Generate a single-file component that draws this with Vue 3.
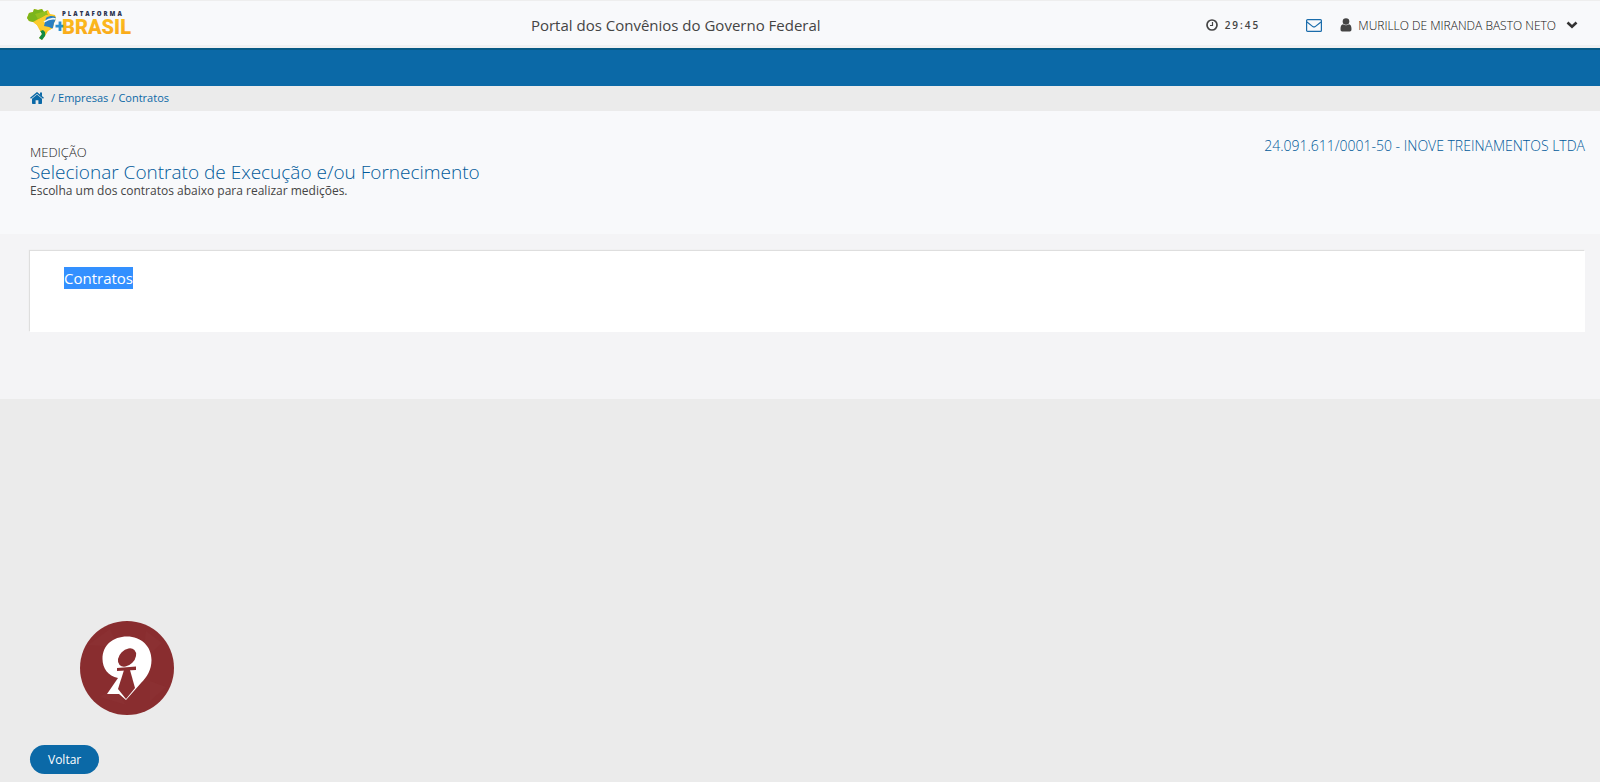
<template>
  <div class="page">
    <header class="topbar">
      <a class="brand" href="#" aria-label="Plataforma +Brasil">
        <svg class="brand-logo" viewBox="0 0 108 34" width="108" height="34">
          <defs>
            <clipPath id="country">
              <path :d="countryShape" />
            </clipPath>
            <linearGradient id="gold" x1="0" y1="0" x2="0" y2="1">
              <stop offset="0" stop-color="#fcc11f" />
              <stop offset="1" stop-color="#f9a51a" />
            </linearGradient>
          </defs>
          <g clip-path="url(#country)">
            <rect width="32" height="34" fill="#f9c623" />
            <path d="M0 0H22L20 7L14 10L7 14L0 17Z" fill="#7ab51d" />
            <path d="M9 6L20 3L22 7L12 11Z" fill="#95c11f" />
            <path d="M7 15L20 7L32 8L24 22L18 23Z" fill="#fccb2d" />
            <path d="M20 10C24 7 30 8 30 10L27 21L23 19L18 18Z" fill="#2a7fc1" />
            <path d="M18 14C22 11 26 10 30 11" stroke="#eef6fb" stroke-width="1.500" fill="none" />
            <path d="M12 24L17 22L19 24L20 34H12Z" fill="#118a43" />
          </g>
          <path d="M34 13.500V23M29.500 18.200H39" stroke="#2a8fd0" stroke-width="2.800" />
          <text class="logo-top" x="36" y="8">PLATAFORMA</text>
          <text class="logo-name" x="36" y="26">BRASIL</text>
        </svg>
      </a>
      <h1 class="portal-title">Portal dos Convênios do Governo Federal</h1>
      <div class="session">
        <div class="timer">
          <svg viewBox="0 0 12 12" width="12" height="12">
            <circle cx="6" cy="6" r="5" fill="none" stroke="#444" stroke-width="1.700" />
            <path d="M6.500 3V6.500H4" fill="none" stroke="#444" stroke-width="1.200" />
          </svg>
          <span>29:45</span>
        </div>
        <a class="mail" href="#" aria-label="Mensagens">
          <svg viewBox="0 0 16 13" width="16" height="13">
            <rect x="0.600" y="0.600" width="14.800" height="11.800" rx="1" fill="none" stroke="#1a6cab" stroke-width="1.200" />
            <path d="M1 3L6.800 7.600Q8 8.400 9.200 7.600L15 3" fill="none" stroke="#1a6cab" stroke-width="1.200" />
          </svg>
        </a>
        <button class="user" type="button">
          <svg viewBox="0 0 12 14" width="12" height="14">
            <path d="M0.500 11C0.500 8 1.500 6.500 3 6.300C4.500 7.500 7.500 7.500 9 6.300C10.500 6.500 11.500 8 11.500 11C11.500 12.800 10.800 13.500 9.800 13.500H2.200C1.200 13.500 0.500 12.800 0.500 11Z" fill="#444" />
            <circle cx="6" cy="3.500" r="3.300" fill="#444" />
          </svg>
          <span>MURILLO DE MIRANDA BASTO NETO</span>
          <svg class="caret" viewBox="0 0 12 8" width="12" height="8">
            <path d="M1.500 1.500L6 5.700L10.500 1.500" fill="none" stroke="#333" stroke-width="2.600" />
          </svg>
        </button>
      </div>
    </header>

    <div class="menu-strip"></div>

    <nav class="breadcrumb">
      <a class="home" href="#" aria-label="Início">
        <svg viewBox="0 0 14 12" width="14" height="12">
          <path d="M7 2.600L12 6.800V11.200Q12 12 11.200 12H8.400V8.300H5.600V12H2.800Q2 12 2 11.200V6.800Z" fill="#0b69a7" />
          <path d="M0.500 6.300L7 0.900L13.500 6.300" fill="none" stroke="#0b69a7" stroke-width="1.400" />
          <path d="M10 0.600H12V4.500L10 2.800Z" fill="#0b69a7" />
        </svg>
      </a>
      <template v-for="item in crumbs" :key="item">
        <span class="sep">/</span>
        <a href="#">{{ item }}</a>
      </template>
    </nav>

    <section class="page-header">
      <div>
        <p class="module">MEDIÇÃO</p>
        <h2>Selecionar Contrato de Execução e/ou Fornecimento</h2>
        <p class="hint">Escolha um dos contratos abaixo para realizar medições.</p>
      </div>
      <p class="company">24.091.611/0001-50 - INOVE TREINAMENTOS LTDA</p>
    </section>

    <main class="content">
      <section class="panel">
        <h3><span class="selected">Contratos</span></h3>
      </section>
    </main>

    <footer class="page-footer">
      <svg class="badge" viewBox="0 0 94 94" width="94" height="94">
        <circle cx="47" cy="47" r="47" fill="#892d2f" />
        <path d="M8 24L30 8L38 26ZM66 10L82 22L62 40ZM70 60L86 66L70 80ZM20 76L34 66L46 84Z" fill="#8b3032" />
        <path d="M27 73L38 57C28 55 22.500 47 22.500 38C22.500 24 33 15.500 47 15.500C61 15.500 71.500 25 71.500 39C71.500 49 67 56 61 62L46 79L39 73Z" fill="#fff" />
        <ellipse cx="47" cy="36.500" rx="7.500" ry="10.500" transform="rotate(45 47 36.500)" fill="#892d2f" />
        <path d="M37 47L56 45.500V49L37 50Z" fill="#892d2f" />
        <path d="M44 49H50L55 67L46 78L38 68Z" fill="#892d2f" />
      </svg>
      <button class="btn-back" type="button">Voltar</button>
    </footer>
  </div>
</template>

<script setup>
const crumbs = ['Empresas', 'Contratos']

const countryShape = 'M1 10L3 5L7 4L8 1L12 2L16 1L18 4L22 2L24 6L29 7L30 11L28 15L27 20L22 23L19 28L16 32L13 30L16 26L13 21L11 17L7 14L3 13Z'
</script>

<style>
body {
  margin: 0;
  background: #ebebeb;
}
</style>

<style scoped>
.page {
  display: flex;
  flex-direction: column;
  min-height: 100vh;
  font-family: "Open Sans", "Noto Sans", sans-serif;
  color: #444;
}

h1,
h2,
h3,
p {
  margin: 0;
  font-weight: 400;
}

a {
  color: #0b69a7;
  text-decoration: none;
}

svg {
  display: block;
}

.topbar {
  display: grid;
  grid-template-columns: 2fr auto 3fr;
  align-items: center;
  box-sizing: border-box;
  height: 48px;
  padding: 4px 22px 0 26px;
  background: #f8f9fb;
  border-top: 1px solid #eee;
  border-bottom: 3px solid #f0f1f2;
}

.brand {
  justify-self: start;
}

.logo-top {
  font: 800 6px "Open Sans", sans-serif;
  letter-spacing: 2px;
  fill: #2b3350;
}

.logo-name {
  font: 900 20px Roboto, sans-serif;
  fill: url(#gold);
}

.portal-title {
  font-size: 15px;
  line-height: 22px;
}

.session {
  display: flex;
  align-items: center;
  justify-content: flex-end;
}

.timer {
  display: flex;
  align-items: center;
  gap: 7px;
  margin-right: 46px;
  font-size: 10px;
  font-weight: 600;
  letter-spacing: 2px;
}

.mail {
  margin-right: 18px;
}

.user {
  display: flex;
  align-items: center;
  gap: 6px;
  padding: 0;
  border: 0;
  background: none;
  font: 300 12px "Open Sans", sans-serif;
  color: #111;
  cursor: pointer;
}

.caret {
  margin-left: 4px;
}

.menu-strip {
  box-sizing: border-box;
  height: 38px;
  background: #0b69a7;
  border-top: 2px solid #075a85;
}

.breadcrumb {
  display: flex;
  align-items: center;
  gap: 3px;
  box-sizing: border-box;
  height: 25px;
  padding: 0 30px 2px;
  font-size: 11px;
  color: #0b69a7;
}

.home {
  margin-right: 4px;
}

.page-header {
  display: flex;
  justify-content: space-between;
  align-items: flex-start;
  box-sizing: border-box;
  min-height: 123px;
  padding: 24px 15px 24px 30px;
  background: #f8f9fb;
}

.module {
  padding-top: 9px;
  font-size: 13px;
  font-weight: 300;
  line-height: 16px;
  color: #222;
}

.page-header h2 {
  font-size: 19px;
  font-weight: 300;
  line-height: 24px;
  color: #00599a;
}

.hint {
  font-size: 12px;
  line-height: 14px;
}

.company {
  font-size: 14px;
  font-weight: 300;
  line-height: 22px;
  color: #00599a;
}

.content {
  padding: 17px 15px 67px 30px;
  background: #f4f4f6;
}

.panel {
  min-height: 66px;
  padding: 15px 34px 0;
  background: #fff;
  box-shadow: -1px -1px 1px #dedede;
}

.panel h3 {
  font-size: 15px;
  line-height: 24px;
}

.selected {
  padding: 1px 0;
  background: #3390ff;
  color: #fff;
}

.page-footer {
  display: flex;
  flex: 1;
  flex-direction: column;
  justify-content: flex-end;
  align-items: flex-start;
  gap: 30px;
  padding: 30px 30px 8px;
}

.badge {
  margin-left: 50px;
}

.btn-back {
  padding: 0 18px;
  border: 0;
  border-radius: 15px;
  background: #0b69a7;
  color: #fff;
  font: 500 12px/29px "Open Sans", sans-serif;
  cursor: pointer;
}
</style>
